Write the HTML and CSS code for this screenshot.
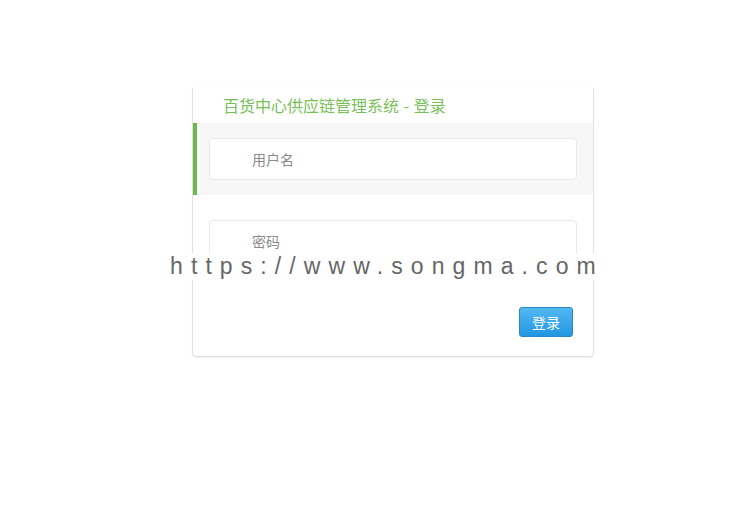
FILE: index.html
```html
<!DOCTYPE html>
<html lang="zh">
<head>
<meta charset="utf-8">
<title>百货中心供应链管理系统 - 登录</title>
<link rel="stylesheet" href="styles.css">
</head>
<body>
<div class="page">
  <div class="card">
    <div class="card-title">百货中心供应链管理系统 - 登录</div>
    <div class="field field-active">
      <div class="input"><span class="placeholder">用户名</span></div>
    </div>
    <div class="field">
      <div class="input"><span class="placeholder">密码</span></div>
    </div>
    <div class="actions">
      <button class="btn">登录</button>
    </div>
  </div>
  <div class="watermark">https://www.songma.com</div>
</div>
</body>
</html>
```
FILE: styles.css
```css
html, body {
  margin: 0;
  padding: 0;
  background: #fff;
  font-family: "Noto Sans CJK SC", "Liberation Sans", sans-serif;
}
.page {
  position: relative;
  padding-top: 88px;
  padding-left: 193px;
  height: 444px;
}
.card {
  width: 400px;
  background: #fff;
  border-radius: 0 0 3px 3px;
  box-shadow: 0 1px 2px rgba(0,0,0,0.18), 1px 0 0 #ececec, -1px 0 0 #ececec;
  padding-bottom: 19px;
}
.card-title {
  height: 35px;
  line-height: 35px;
  padding-left: 30px;
  color: #79bf59;
  font-size: 16px;
  word-spacing: 1px;
}
.field {
  padding: 15px 16px 15px 16px;
  border-left: 4px solid transparent;
}
.field-active {
  background: #f7f7f7;
  border-left-color: #6cb84c;
  padding-left: 12px;
}
.field + .field {
  margin-top: 10px;
  padding-left: 12px;
}
.input {
  height: 40px;
  border: 1px solid #e8e8e8;
  border-radius: 4px;
  background: #fff;
  display: flex;
  align-items: center;
  padding-left: 42px;
}
.placeholder {
  color: #8a8a8a;
  font-size: 14px;
}
.actions {
  display: flex;
  justify-content: flex-end;
  padding: 30px 20px 0 0;
}
.btn {
  width: 54px;
  height: 30px;
  border: 1px solid #2a86c9;
  border-radius: 3px;
  background: linear-gradient(#52b8f2, #2296e2);
  color: #fff;
  font-family: "Noto Sans CJK SC", sans-serif;
  font-size: 14px;
  padding: 0;
}
.watermark {
  position: absolute;
  left: 165px;
  top: 253px;
  width: 445px;
  height: 27px;
  background: #fff;
  color: #666;
  font-family: "Liberation Sans", sans-serif;
  font-size: 23px;
  line-height: 27px;
  letter-spacing: 8.1px;
  padding-left: 5px;
  box-sizing: border-box;
  white-space: nowrap;
}
```
